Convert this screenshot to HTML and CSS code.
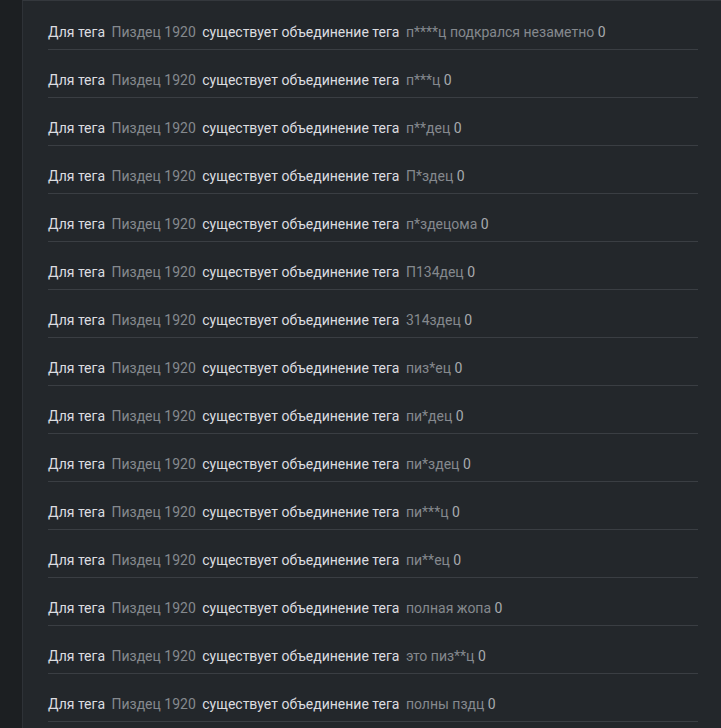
FILE: index.html
```html
<!DOCTYPE html>
<html lang="ru">
<head>
<meta charset="utf-8">
<link rel="stylesheet" href="styles.css">
</head>
<body>
<div class="page">
  <div class="side"></div>
  <div class="panel">
    <ul class="list">
      <li class="row"><span class="w">Для тега</span> <span class="g">Пиздец 1920</span> <span class="w">существует объединение тега</span> <span class="g">п****ц подкрался незаметно</span> <span class="n">0</span></li>
      <li class="row"><span class="w">Для тега</span> <span class="g">Пиздец 1920</span> <span class="w">существует объединение тега</span> <span class="g">п***ц</span> <span class="n">0</span></li>
      <li class="row"><span class="w">Для тега</span> <span class="g">Пиздец 1920</span> <span class="w">существует объединение тега</span> <span class="g">п**дец</span> <span class="n">0</span></li>
      <li class="row"><span class="w">Для тега</span> <span class="g">Пиздец 1920</span> <span class="w">существует объединение тега</span> <span class="g">П*здец</span> <span class="n">0</span></li>
      <li class="row"><span class="w">Для тега</span> <span class="g">Пиздец 1920</span> <span class="w">существует объединение тега</span> <span class="g">п*здецома</span> <span class="n">0</span></li>
      <li class="row"><span class="w">Для тега</span> <span class="g">Пиздец 1920</span> <span class="w">существует объединение тега</span> <span class="g">П134дец</span> <span class="n">0</span></li>
      <li class="row"><span class="w">Для тега</span> <span class="g">Пиздец 1920</span> <span class="w">существует объединение тега</span> <span class="g">314здец</span> <span class="n">0</span></li>
      <li class="row"><span class="w">Для тега</span> <span class="g">Пиздец 1920</span> <span class="w">существует объединение тега</span> <span class="g">пиз*ец</span> <span class="n">0</span></li>
      <li class="row"><span class="w">Для тега</span> <span class="g">Пиздец 1920</span> <span class="w">существует объединение тега</span> <span class="g">пи*дец</span> <span class="n">0</span></li>
      <li class="row"><span class="w">Для тега</span> <span class="g">Пиздец 1920</span> <span class="w">существует объединение тега</span> <span class="g">пи*здец</span> <span class="n">0</span></li>
      <li class="row"><span class="w">Для тега</span> <span class="g">Пиздец 1920</span> <span class="w">существует объединение тега</span> <span class="g">пи***ц</span> <span class="n">0</span></li>
      <li class="row"><span class="w">Для тега</span> <span class="g">Пиздец 1920</span> <span class="w">существует объединение тега</span> <span class="g">пи**ец</span> <span class="n">0</span></li>
      <li class="row"><span class="w">Для тега</span> <span class="g">Пиздец 1920</span> <span class="w">существует объединение тега</span> <span class="g">полная жопа</span> <span class="n">0</span></li>
      <li class="row"><span class="w">Для тега</span> <span class="g">Пиздец 1920</span> <span class="w">существует объединение тега</span> <span class="g">это пиз**ц</span> <span class="n">0</span></li>
      <li class="row"><span class="w">Для тега</span> <span class="g">Пиздец 1920</span> <span class="w">существует объединение тега</span> <span class="g">полны пздц</span> <span class="n">0</span></li>
    </ul>
  </div>
</div>
</body>
</html>
```

FILE: styles.css
```css
html, body {
  margin: 0;
  padding: 0;
  background: #1c1f22;
  height: 100%;
  overflow: hidden;
}
.page {
  display: flex;
  height: 100%;
  font-family: Roboto, "Noto Sans", sans-serif;
  font-size: 14px;
}
.side {
  width: 22px;
  flex: none;
  background: #1c1f22;
}
.panel {
  flex: 1;
  background: #23272b;
  border-left: 1px solid #2e3237;
  border-top: 1px solid #34383d;
  padding: 1px 23px 0 25px;
}
.list {
  list-style: none;
  margin: 0;
  padding: 0;
}
.row {
  padding: 22px 0 9px;
  line-height: 16px;
  border-bottom: 1px solid #3a3e43;
  white-space: nowrap;
}
.w {
  color: #dcdde0;
  margin-right: 3px;
}
.g {
  color: #85898e;
  margin-right: 3px;
}
.n {
  color: #a7aaae;
  margin-left: -3px;
}
```
